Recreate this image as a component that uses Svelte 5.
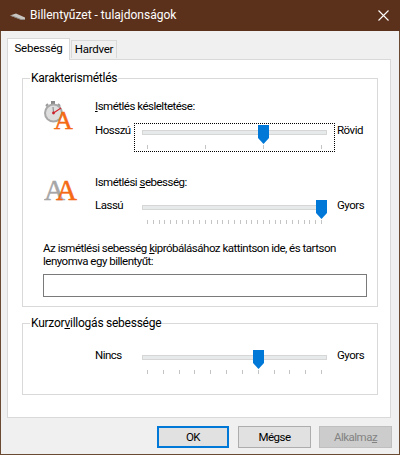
<script>
  const delayTicks = 4;
  const speedTicks = 31;
  const blinkTicks = 12;
</script>

{#snippet slider(ticks, pos, focused)}
  <div class="slider" class:focused>
    <div class="track"></div>
    <div class="thumb" style={`left: ${13 + (174 * pos) / (ticks - 1) - 5}px`}>
      <svg width="11" height="19" viewBox="0 0 11 19">
        <path d="M0 0H11V13L5.5 19L0 13Z" fill="#0078d7" />
      </svg>
    </div>
    <div class="ticks">
      {#each Array(ticks) as _}
        <span></span>
      {/each}
    </div>
  </div>
{/snippet}

<div class="window">
  <header class="titlebar">
    <svg class="app-icon" width="16" height="8" viewBox="0 0 16 8">
      <path d="M0 2.5L6 0.5L15 4.5V6.5H11Z" fill="#c9c6c2" />
      <path d="M1 2.5L11 6.5H15" fill="none" stroke="#8f8a85" stroke-width="1" />
    </svg>
    <span class="title">Billentyűzet - tulajdonságok</span>
    <svg class="close" width="11" height="11" viewBox="0 0 11 11">
      <path d="M0.5 0.5L10.5 10.5M10.5 0.5L0.5 10.5" stroke="#fff" stroke-width="1.1" />
    </svg>
  </header>

  <main class="content">
    <div class="tabs">
      <div class="tab active">Sebesség</div>
      <div class="tab">Hardver</div>
    </div>

    <div class="panel">
      <fieldset class="group repeat">
        <legend>Karakterismétlés</legend>

        <div class="row first">
          <div class="icon">
            <svg width="36" height="36" viewBox="0 0 36 36">
              <rect x="7" y="2" width="4" height="3" fill="#8a8a8a" />
              <path d="M2 7L4 5M14 5L16 7" stroke="#9a9a9a" stroke-width="2" />
              <circle cx="9.5" cy="14" r="9.5" fill="#a8a8a8" />
              <circle cx="9.5" cy="14" r="7.5" fill="#dedede" />
              <path d="M9.5 14L17 9" stroke="#d8232f" stroke-width="1.2" />
              <path d="M9.5 14L9 8" stroke="#808080" stroke-width="1" />
              <circle cx="9.5" cy="14" r="1.4" fill="#c8202c" />
              <text x="10" y="30" class="big-a orange">A</text>
            </svg>
          </div>
          <div class="rows">
            <div class="caption"><u>I</u>smétlés késleltetése:</div>
            <div class="line">
              <span class="end">Hosszú</span>
              {@render slider(delayTicks, 2, true)}
              <span class="after">Rövid</span>
            </div>
          </div>
        </div>

        <div class="row second">
          <div class="icon">
            <svg width="36" height="36" viewBox="0 0 36 36">
              <text x="0" y="25" class="big-a tall gray">A</text>
              <text x="12" y="25" class="big-a tall orange">A</text>
            </svg>
          </div>
          <div class="rows">
            <div class="caption">Ismétlési <u>s</u>ebesség:</div>
            <div class="line">
              <span class="end">Lassú</span>
              {@render slider(speedTicks, 30, false)}
              <span class="after">Gyors</span>
            </div>
          </div>
        </div>

        <p class="hint">
          Az ismétlési sebesség <u>k</u>ipróbálásához kattintson ide, és tartson
          lenyomva egy billentyűt:
        </p>
        <div class="test-input"></div>
      </fieldset>

      <fieldset class="group blink">
        <legend>Kurzor<u>v</u>illogás sebessége</legend>
        <div class="line">
          <span class="end">Nincs</span>
          {@render slider(blinkTicks, 7, false)}
          <span class="after">Gyors</span>
        </div>
      </fieldset>
    </div>

    <footer class="buttons">
      <button class="default">OK</button>
      <button>Mégse</button>
      <button disabled>Alkalma<u>z</u></button>
    </footer>
  </main>
</div>

<style>
  :global(body) {
    margin: 0;
  }

  .window {
    width: 400px;
    height: 455px;
    box-sizing: border-box;
    display: flex;
    flex-direction: column;
    background: #f0f0f0;
    border: 1px solid #6b4a33;
    border-top: none;
    font-family: Roboto, sans-serif;
    font-size: 12px;
    line-height: 15px;
    letter-spacing: -0.25px;
    color: #000;
  }

  .caption,
  .end,
  .after,
  .hint,
  button {
    font-size: 11.5px;
    letter-spacing: -0.5px;
  }

  /* TITLE */
  .titlebar {
    height: 31px;
    margin: 0 -1px;
    flex: none;
    display: flex;
    align-items: center;
    background: #5c311b;
    color: #fff;
  }
  .app-icon {
    margin-left: 10px;
    margin-top: 2px;
  }
  .title {
    margin-left: 4px;
    flex: 1;
    letter-spacing: 0;
  }
  .close {
    margin-right: 11px;
    margin-top: -1px;
  }

  .content {
    flex: 1;
    display: flex;
    flex-direction: column;
    padding: 7px 7px 0 6px;
  }

  /* TABS */
  .tabs {
    display: flex;
    align-items: flex-end;
    height: 21px;
    position: relative;
    z-index: 1;
  }
  .tab {
    box-sizing: border-box;
    height: 18px;
    padding: 1px 0 0 0;
    margin-left: 1px;
    margin-bottom: 1px;
    width: 46px;
    border: 1px solid #d9d9d9;
    border-bottom: none;
    background: #f0f0f0;
    text-align: center;
    font-size: 11.5px;
  }
  .tab.active {
    width: 63px;
    height: 22px;
    margin: 0 0 -1px 0;
    padding-top: 2px;
    background: #fff;
  }

  /* PANEL */
  .panel {
    box-sizing: border-box;
    height: 359px;
    width: 384px;
    padding: 11px 12px 0 14px;
    background: #fff;
    border: 1px solid #d9d9d9;
  }

  .group {
    margin: 0;
    padding: 0;
    border: 1px solid #d9d9d9;
    min-width: 0;
  }
  .group legend {
    margin-left: 7px;
    padding: 0 1px;
    line-height: 15px;
    height: 15px;
  }
  .repeat {
    height: 236px;
    box-sizing: border-box;
  }
  .blink {
    height: 79px;
    box-sizing: border-box;
    margin-top: 9px;
  }
  .blink .line {
    margin-top: 17px;
    margin-left: 72px;
  }

  /* ROWS */
  .row {
    display: flex;
  }
  .row.first {
    margin-top: 13px;
    height: 76px;
  }
  .row.second {
    height: 67px;
  }
  .icon {
    width: 72px;
    flex: none;
    padding-left: 21px;
    box-sizing: border-box;
  }
  .caption {
    height: 24px;
  }
  .row.second .caption {
    height: 23px;
  }
  .line {
    display: flex;
    align-items: flex-start;
  }
  .end {
    width: 39px;
    flex: none;
  }
  .after {
    margin-left: 2px;
  }

  .big-a {
    font-family: "Liberation Serif", serif;
    font-size: 26px;
    letter-spacing: 0;
    stroke-width: 0.5px;
  }
  .big-a.tall {
    font-size: 29px;
  }
  .orange {
    fill: #f56a14;
    stroke: #f56a14;
  }
  .gray {
    fill: #a6a6a6;
    stroke: #a6a6a6;
  }

  /* SLIDER */
  .slider {
    position: relative;
    width: 201px;
    height: 29px;
    box-sizing: border-box;
    flex: none;
  }
  .slider.focused {
    outline: 1px dotted #000;
    outline-offset: -1px;
  }
  .track {
    position: absolute;
    left: 8px;
    top: 7px;
    width: 185px;
    height: 5px;
    box-sizing: border-box;
    background: #e7eaea;
    border: 1px solid #d6d6d6;
  }
  .thumb {
    position: absolute;
    top: 2px;
    height: 19px;
  }
  .thumb svg {
    display: block;
  }
  .ticks {
    position: absolute;
    left: 13px;
    top: 22px;
    width: 175px;
    display: flex;
    justify-content: space-between;
  }
  .ticks span {
    width: 1px;
    height: 4px;
    background: #c4c4c4;
  }

  /* TEST AREA */
  .hint {
    margin: 0 0 0 20px;
    line-height: 13px;
    width: 330px;
  }
  .test-input {
    box-sizing: border-box;
    margin: 6px 0 0 20px;
    width: 324px;
    height: 23px;
    border: 1px solid #7a7a7a;
    background: #fff;
  }

  /* BUTTONS */
  .buttons {
    display: flex;
    justify-content: flex-end;
    gap: 8px;
    margin-top: 8px;
  }
  button {
    box-sizing: border-box;
    width: 73px;
    height: 22px;
    padding: 0;
    font-family: inherit;
    line-height: inherit;
    color: #000;
    background: #e1e1e1;
    border: 1px solid #adadad;
  }
  button.default {
    width: 72px;
    margin-right: 1px;
    border: 2px solid #0078d7;
  }
  button:disabled {
    background: #cccccc;
    border-color: #bfbfbf;
    color: #838383;
  }
</style>
